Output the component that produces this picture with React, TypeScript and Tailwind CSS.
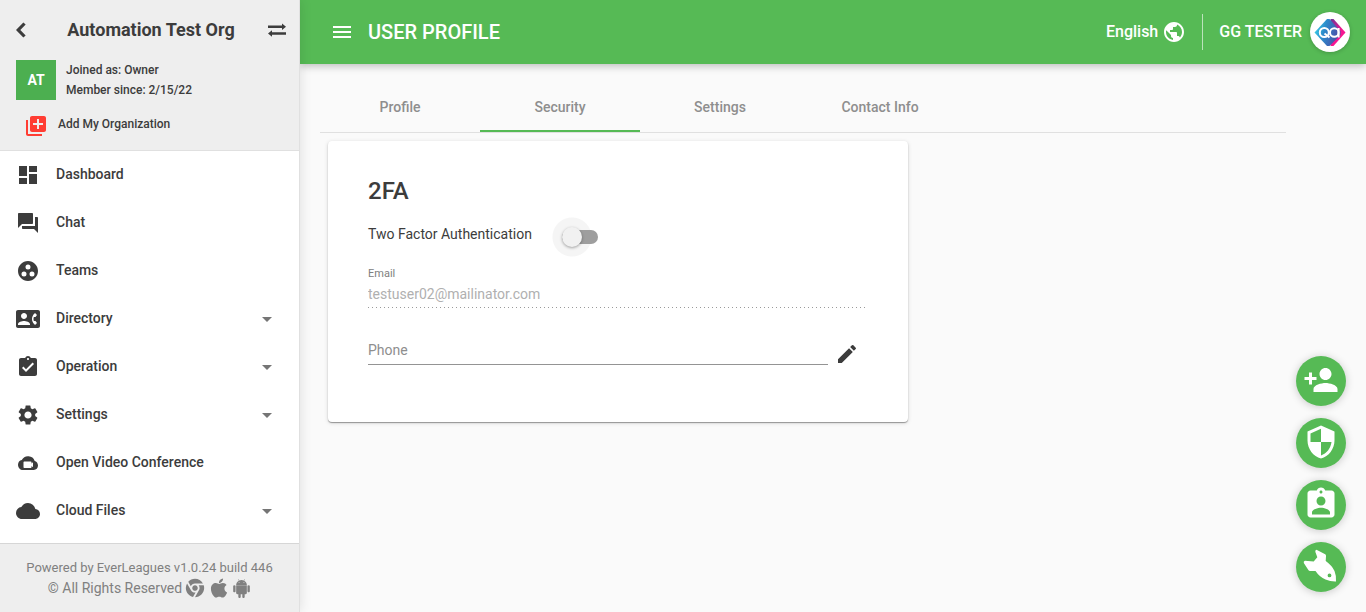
import type { ReactNode } from "react";
import type { IconType } from "react-icons";
import {
  MdArrowDropDown,
  MdAssignmentInd,
  MdAssignmentTurnedIn,
  MdCloud,
  MdContactPhone,
  MdDashboard,
  MdEdit,
  MdGroupWork,
  MdLibraryAdd,
  MdMenu,
  MdPersonAdd,
  MdPublic,
  MdQuestionAnswer,
  MdSecurity,
  MdSettings,
} from "react-icons/md";
import { BsAndroid2 } from "react-icons/bs";
import { FaApple } from "react-icons/fa";
import { RiChromeFill } from "react-icons/ri";

function ChevronIcon() {
  return (
    <svg viewBox="0 0 10 16" className="h-4 w-[10px]" fill="none" stroke="currentColor" strokeWidth="3.200">
      <path d="M8.500 1.500 2.200 8l6.300 6.500" />
    </svg>
  );
}

function SwapIcon() {
  return (
    <svg viewBox="0 0 18 14" className="h-[14px] w-[18px]" fill="currentColor">
      <path d="M0 2.500h14V.5l4 3.200-4 3.200V4.900H0zM18 9.300H4V7.300L0 10.500l4 3.200v-2h14z" />
    </svg>
  );
}

function CloudVideoIcon() {
  return (
    <svg viewBox="0 0 24 24" className="size-6" fill="currentColor">
      <path
        fillRule="evenodd"
        d="M18.700 10A7 7 0 0 0 5.800 9.100 5 5 0 0 0 2 13.700C2 16.700 4.200 19 7 19h10.800c2.400 0 4.200-1.900 4.200-4.400 0-2.300-1.500-4.300-3.300-4.600zM8.200 10.500h6.600q.7 0 .7.700v1.300l1.500-1.300v5.100l-1.500-1.300v1.300q0 .7-.7.700H8.200q-.7 0-.7-.7v-5.100q0-.7.700-.7z"
      />
    </svg>
  );
}

function RocketIcon() {
  return (
    <svg viewBox="0 0 36 36" className="size-9" fill="currentColor">
      <path
        fillRule="evenodd"
        d="M13.500 1.800 22.200 6.200Q23.200 6.900 23 8.200L22.700 13Q29 17.500 31.500 23 33.500 28 33 33.500 27.500 33.700 22.500 31.500 16.500 29 12.500 23H7.200Q5.800 23 5.200 21.800L.8 15Q.3 13.200 2 12.800L10.700 13.500 14.300 9.200 12.300 3.800Q12.200 2 13.500 1.800zM26.500 25.500a1.900 1.900 0 1 0 0 3.800 1.900 1.900 0 0 0 0-3.800z"
      />
    </svg>
  );
}

function AvatarLogo() {
  return (
    <svg viewBox="0 0 40 40" className="size-10" role="img" aria-label="GG TESTER">
      <defs>
        <linearGradient id="left" x1="0" y1="0" x2="1" y2="0.300">
          <stop offset="0" stopColor="#3fe0f0" />
          <stop offset="0.450" stopColor="#2c8ccb" />
          <stop offset="1" stopColor="#4a4fa8" />
        </linearGradient>
        <linearGradient id="right" x1="0" y1="0" x2="0.600" y2="1">
          <stop offset="0" stopColor="#6b3596" />
          <stop offset="0.600" stopColor="#f0188f" />
          <stop offset="1" stopColor="#ff1493" />
        </linearGradient>
      </defs>
      <path d="M20.500 7h3L35.500 20.500 23.500 34h-3z" fill="url(#right)" />
      <path d="M17 7h2.500L30.500 19v4L19.500 34H17L4.500 20.500z" fill="url(#left)" />
      <g fill="none" stroke="#fff" strokeWidth="2">
        <circle cx="14.300" cy="20.500" r="4.500" />
        <path d="m14.500 21.500 5 4" />
        <circle cx="24.300" cy="20.500" r="4.300" />
        <path d="M28.600 16v9.500" />
      </g>
    </svg>
  );
}

type NavItem = { label: string; icon: IconType | (() => ReactNode); expandable?: boolean };

const navItems: NavItem[] = [
  { label: "Dashboard", icon: MdDashboard },
  { label: "Chat", icon: MdQuestionAnswer },
  { label: "Teams", icon: MdGroupWork },
  { label: "Directory", icon: MdContactPhone, expandable: true },
  { label: "Operation", icon: MdAssignmentTurnedIn, expandable: true },
  { label: "Settings", icon: MdSettings, expandable: true },
  { label: "Open Video Conference", icon: CloudVideoIcon },
  { label: "Cloud Files", icon: MdCloud, expandable: true },
];

function Sidebar() {
  return (
    <aside className="relative z-10 flex w-[300px] shrink-0 flex-col border-r border-[#e0e0e0] bg-white text-[#3c3c3c] shadow-[0_0_12px_rgba(0,0,0,0.12)]">
      <div className="flex flex-col border-b border-[#e0e0e0] bg-[#eeeeee] px-4 pb-[11px]">
        <div className="flex h-15 items-center justify-between">
          <button type="button" aria-label="Back">
            <ChevronIcon />
          </button>
          <h2 className="pl-2 text-lg font-bold">Automation Test Org</h2>
          <button type="button" aria-label="Switch organization" className="-mr-[3px]">
            <SwapIcon />
          </button>
        </div>
        <div className="flex items-center gap-[10px]">
          <div className="flex size-10 items-center justify-center bg-[#4caf50] text-sm font-bold text-white">AT</div>
          <div className="text-xs leading-5 font-medium">
            <p>Joined as: Owner</p>
            <p>Member since: 2/15/22</p>
          </div>
        </div>
        <button type="button" className="mt-[13px] flex h-[26px] items-center gap-2 pl-2 text-xs font-medium">
          <MdLibraryAdd className="size-6 text-[#ff3d33]" />
          <span className="pb-1 pl-[2px]">Add My Organization</span>
        </button>
      </div>
      <nav className="min-h-0 flex-1 overflow-hidden">
        <ul>
          {navItems.map(({ label, icon: Icon, expandable }) => (
            <li key={label}>
              <a href="#" className="flex h-12 items-center px-4 text-sm font-medium">
                <span className="mr-4 flex [&>svg]:size-6">
                  <Icon />
                </span>
                <span className="pb-[2px]">{label}</span>
                {expandable && <MdArrowDropDown className="mr-1 ml-auto size-6 text-[#757575]" />}
              </a>
            </li>
          ))}
        </ul>
      </nav>
      <footer className="border-t border-[#d6d6d6] bg-[#eeeeee] py-[14px] text-center text-[13px] leading-5 text-[#808080]">
        <p>Powered by EverLeagues v1.0.24 build 446</p>
        <p className="flex h-5 items-center justify-center gap-[2px] text-sm">
          <span>© All Rights Reserved</span>
          <RiChromeFill className="size-[22px]" />
          <FaApple className="size-[22px]" />
          <BsAndroid2 className="size-[19px]" />
        </p>
      </footer>
    </aside>
  );
}

function Header() {
  return (
    <header className="flex h-16 shrink-0 items-center bg-[#56ba55] pr-4 pl-[30px] text-white shadow-[0_2px_8px_rgba(0,0,0,0.25)]">
      <button type="button" aria-label="Menu">
        <MdMenu className="size-6" />
      </button>
      <h1 className="ml-[14px] text-xl font-medium">USER PROFILE</h1>
      <button type="button" className="ml-auto flex items-center gap-1 font-medium">
        English
        <MdPublic className="size-6" />
      </button>
      <div className="mx-4 h-9 w-px bg-white/60" />
      <button type="button" className="flex items-center gap-2 font-medium">
        GG TESTER
        <span className="rounded-full bg-white shadow-[0_1px_4px_rgba(0,0,0,0.2)]">
          <AvatarLogo />
        </span>
      </button>
    </header>
  );
}

const tabs = ["Profile", "Security", "Settings", "Contact Info"];

function Tabs() {
  return (
    <div role="tablist" className="flex border-b border-[#e0e0e0]">
      {tabs.map((tab) => (
        <button
          key={tab}
          type="button"
          role="tab"
          aria-selected={tab === "Security"}
          className="h-12 w-40 border-b-2 border-transparent text-sm font-medium text-[#8e8e8e] aria-selected:border-[#56ba55]"
        >
          {tab}
        </button>
      ))}
    </div>
  );
}

function SecurityCard() {
  return (
    <section className="mt-2 ml-2 w-full max-w-[580px] rounded bg-white px-10 pt-8 pb-14 text-[#3c3c3c] shadow-[0_1px_1px_rgba(0,0,0,0.35),0_1px_4px_rgba(0,0,0,0.15)]">
      <h2 className="text-2xl leading-9 font-medium">2FA</h2>
      <div className="mt-2 flex h-10 items-center">
        <label htmlFor="two-factor" className="pb-[6px] text-sm">
          Two Factor Authentication
        </label>
        <span className="ml-5 flex h-10 w-[46px] items-center justify-end bg-[radial-gradient(circle_at_20px_20px,#f5f5f5_19px,transparent_20px)]">
          <input
            id="two-factor"
            type="checkbox"
            role="switch"
            className="relative h-[14px] w-9 appearance-none rounded-full bg-[#9e9e9e] before:absolute before:-top-[3px] before:left-0 before:size-5 before:rounded-full before:bg-[#f1f1f1] before:shadow-[0_1px_3px_rgba(0,0,0,0.35)]"
          />
        </span>
      </div>
      <div className="mt-[9px] mr-[3px] flex flex-col">
        <label htmlFor="email" className="text-[11px] leading-4 text-[#808080]">
          Email
        </label>
        <input
          id="email"
          type="email"
          disabled
          defaultValue="testuser02@mailinator.com"
          className="h-6 w-full bg-transparent text-sm text-[#b0b0b0]"
        />
        <div className="mt-px h-px bg-[repeating-linear-gradient(to_right,#9a9a9a_0_1px,transparent_1px_4px)]" />
      </div>
      <div className="mt-7 flex items-end">
        <input
          type="tel"
          aria-label="Phone"
          placeholder="Phone"
          className="mb-px h-[29px] min-w-0 flex-1 border-b border-[#949494] text-sm outline-none placeholder:text-[#8e8e8e]"
        />
        <button type="button" aria-label="Edit phone" className="mr-[9px] ml-[7px]">
          <MdEdit className="size-6" />
        </button>
      </div>
    </section>
  );
}

const actions = [
  { label: "Add user", icon: MdPersonAdd },
  { label: "Security", icon: MdSecurity },
  { label: "Assignments", icon: MdAssignmentInd },
  { label: "Launch", icon: RocketIcon },
];

function FloatingActions() {
  return (
    <div className="fixed right-5 bottom-5 flex flex-col gap-3">
      {actions.map(({ label, icon: Icon }) => (
        <button
          key={label}
          type="button"
          aria-label={label}
          className="flex size-[50px] items-center justify-center rounded-full bg-[#56ba55] pb-[2px] text-white shadow-[0_1px_8px_rgba(0,0,0,0.2)] [&>svg]:size-9"
        >
          <Icon />
        </button>
      ))}
    </div>
  );
}

export default function App() {
  return (
    <div className="flex h-dvh overflow-hidden bg-[#fafafa] font-[Roboto,sans-serif]">
      <Sidebar />
      <div className="flex min-w-0 flex-1 flex-col">
        <Header />
        <main className="flex-1 overflow-auto pt-5 pr-20 pl-5">
          <Tabs />
          <SecurityCard />
        </main>
      </div>
      <FloatingActions />
    </div>
  );
}
